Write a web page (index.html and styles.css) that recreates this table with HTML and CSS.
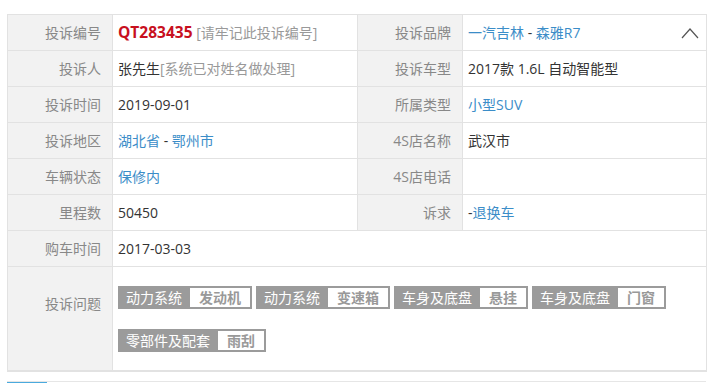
FILE: index.html
```html
<!DOCTYPE html>
<html lang="zh-CN">
<head>
    <meta charset="UTF-8">
    <meta name="viewport" content="width=device-width, initial-scale=1.0">
    <title>投诉详情</title>
    <link rel="stylesheet" href="styles.css">
</head>
<body>
    <div class="complaint">
        <table class="info-table">
            <colgroup>
                <col class="col-label">
                <col class="col-value">
                <col class="col-label">
                <col class="col-value2">
            </colgroup>
            <tr>
                <th>投诉编号</th>
                <td><b class="code">QT283435</b> <span class="note">[请牢记此投诉编号]</span></td>
                <th>投诉品牌</th>
                <td class="has-toggle">
                    <a href="#" class="link">一汽吉林</a> - <a href="#" class="link">森雅R7</a>
                    <svg class="toggle" width="18" height="12" viewBox="0 0 18 12"><path d="M1 11 L9 2 L17 11" fill="none" stroke="#555" stroke-width="1.2"/></svg>
                </td>
            </tr>
            <tr>
                <th>投诉人</th>
                <td>张先生<span class="note">[系统已对姓名做处理]</span></td>
                <th>投诉车型</th>
                <td>2017款 1.6L 自动智能型</td>
            </tr>
            <tr>
                <th>投诉时间</th>
                <td>2019-09-01</td>
                <th>所属类型</th>
                <td><a href="#" class="link">小型SUV</a></td>
            </tr>
            <tr>
                <th>投诉地区</th>
                <td><a href="#" class="link">湖北省</a> - <a href="#" class="link">鄂州市</a></td>
                <th>4S店名称</th>
                <td>武汉市</td>
            </tr>
            <tr>
                <th>车辆状态</th>
                <td><a href="#" class="link">保修内</a></td>
                <th>4S店电话</th>
                <td></td>
            </tr>
            <tr>
                <th>里程数</th>
                <td>50450</td>
                <th>诉求</th>
                <td>-<a href="#" class="link">退换车</a></td>
            </tr>
            <tr>
                <th>购车时间</th>
                <td colspan="3">2017-03-03</td>
            </tr>
            <tr>
                <th class="issues-label">投诉问题</th>
                <td colspan="3" class="issues">
                    <div class="tag-list">
                        <span class="tag"><span class="tag-cat">动力系统</span><span class="tag-sub">发动机</span></span>
                        <span class="tag"><span class="tag-cat">动力系统</span><span class="tag-sub">变速箱</span></span>
                        <span class="tag"><span class="tag-cat">车身及底盘</span><span class="tag-sub">悬挂</span></span>
                        <span class="tag"><span class="tag-cat">车身及底盘</span><span class="tag-sub">门窗</span></span>
                        <span class="tag"><span class="tag-cat">零部件及配套</span><span class="tag-sub">雨刮</span></span>
                    </div>
                </td>
            </tr>
        </table>
        <div class="tab-bar">
            <span class="tab active"></span>
        </div>
    </div>
</body>
</html>
```

FILE: styles.css
```css
* {
    margin: 0;
    padding: 0;
    box-sizing: border-box;
}
body {
    background: #fff;
    font-family: "Open Sans", "Noto Sans CJK SC", sans-serif;
    font-size: 14px;
    color: #333;
}
.complaint {
    width: 699px;
    margin: 14px 0 0 7px;
}
.info-table {
    width: 699px;
    border-collapse: collapse;
    table-layout: fixed;
    border: 1px solid #e2e2e2;
    border-bottom-width: 2px;
}
.col-label {
    width: 105px;
}
.col-value {
    width: 245px;
}
.col-value2 {
    width: 244px;
}
.info-table th,
.info-table td {
    height: 36px;
    border: 1px solid #e2e2e2;
    line-height: 20px;
    white-space: nowrap;
}
.info-table th {
    background: #f2f2f2;
    color: #888;
    font-weight: normal;
    text-align: right;
    padding: 0 11px 0 0;
}
.info-table td {
    text-align: left;
    padding: 0 5px;
}
.code {
    color: #c8101e;
    font-size: 15.5px;
    font-weight: bold;
}
.note {
    color: #999;
}
.link {
    color: #3b8dc8;
    text-decoration: none;
}
.has-toggle {
    position: relative;
}
.toggle {
    position: absolute;
    right: 7px;
    top: 12px;
}
.info-table th.issues-label {
    vertical-align: top;
    padding-top: 27px;
}
.info-table td.issues {
    padding: 19px 5px 18px;
}
.tag-list {
    display: flex;
    flex-wrap: wrap;
    column-gap: 4px;
    row-gap: 20px;
}
.tag {
    display: inline-flex;
    height: 23px;
    border: 2px solid #9b9b9b;
    background: #9b9b9b;
    line-height: 19px;
}
.tag-cat {
    color: #fff;
    padding: 0 8px 0 6px;
}
.tag-sub {
    background: #fff;
    color: #999;
    font-weight: bold;
    padding: 0 9px;
}
.tab-bar {
    margin-top: 9px;
    border-top: 1px solid #e6e6e6;
    height: 3px;
}
.tab {
    display: block;
    width: 40px;
    height: 3px;
    background: #4aaade;
}
```
